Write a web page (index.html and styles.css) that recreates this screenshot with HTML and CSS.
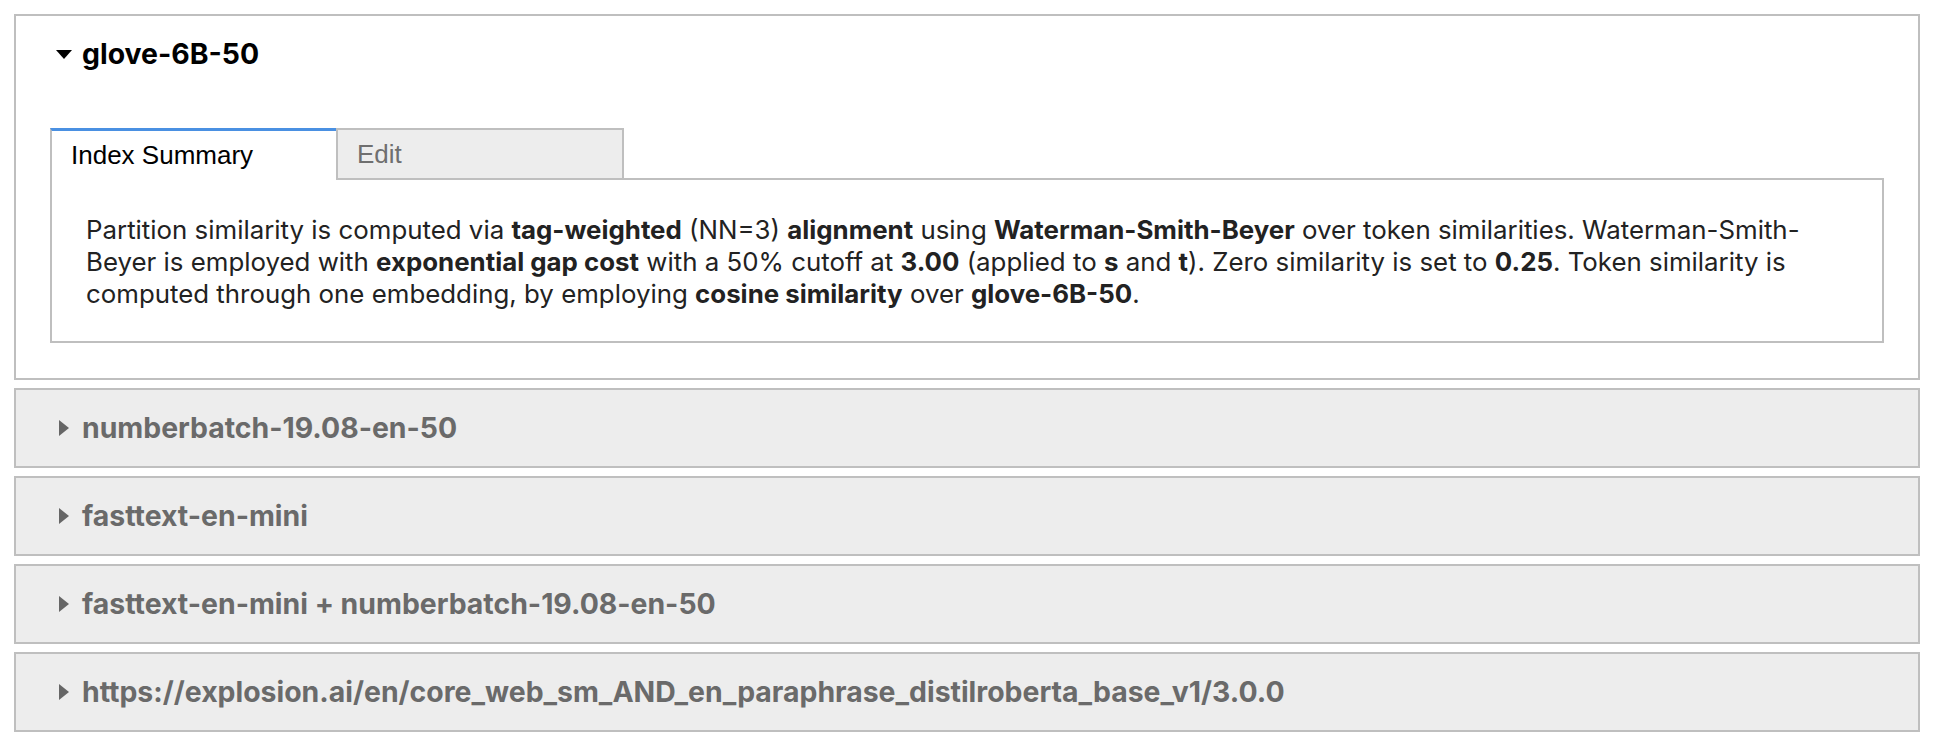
FILE: index.html
```html
<!DOCTYPE html>
<html lang="en">
<head>
<meta charset="utf-8">
<title>Indexes</title>
<link rel="stylesheet" href="styles.css">
</head>
<body>
<div class="list">
  <details class="item" open>
    <summary class="item-head"><span class="marker marker-open"></span><span class="item-title">glove-6B-50</span></summary>
    <div class="item-body">
      <div class="tabs">
        <div class="tab tab-active">Index Summary</div>
        <div class="tab tab-idle">Edit</div>
        <div class="tab-fill"></div>
      </div>
      <div class="panel">
        <p class="summary-text">Partition similarity is computed via <b>tag-weighted</b> (NN=3) <b>alignment</b> using <b>Waterman-Smith-Beyer</b> over token similarities. Waterman-Smith-Beyer is employed with <b>exponential gap cost</b> with a 50% cutoff at <b>3.00</b> (applied to <b>s</b> and <b>t</b>). Zero similarity is set to <b>0.25</b>. Token similarity is computed through one embedding, by employing <b>cosine similarity</b> over <b>glove-6B-50</b>.</p>
      </div>
    </div>
  </details>
  <details class="item item-closed">
    <summary class="item-head"><span class="marker marker-closed"></span><span class="item-title">numberbatch-19.08-en-50</span></summary>
  </details>
  <details class="item item-closed">
    <summary class="item-head"><span class="marker marker-closed"></span><span class="item-title">fasttext-en-mini</span></summary>
  </details>
  <details class="item item-closed">
    <summary class="item-head"><span class="marker marker-closed"></span><span class="item-title">fasttext-en-mini + numberbatch-19.08-en-50</span></summary>
  </details>
  <details class="item item-closed">
    <summary class="item-head"><span class="marker marker-closed"></span><span class="item-title">https://explosion.ai/en/core_web_sm_AND_en_paraphrase_distilroberta_base_v1/3.0.0</span></summary>
  </details>
</div>
</body>
</html>
```

FILE: styles.css
```css
html, body {
  margin: 0;
  padding: 0;
  background: #ffffff;
}

body {
  font-family: Inter, Roboto, "Liberation Sans", sans-serif;
  color: #222222;
}

.list {
  display: flex;
  flex-direction: column;
  gap: 8px;
  padding: 14px;
}

.item {
  border: 2px solid #bfbfbf;
  background: #ffffff;
}

.item-closed {
  background: #ededed;
}

.item-head {
  list-style: none;
  display: flex;
  align-items: center;
  height: 76px;
  padding-left: 40px;
  cursor: pointer;
}

.item-head::-webkit-details-marker {
  display: none;
}

.marker {
  width: 16px;
  height: 16px;
  flex: none;
  display: flex;
  justify-content: center;
  align-items: center;
  margin-right: 10px;
}

.marker-open::before {
  content: "";
  display: block;
  width: 0;
  height: 0;
  border-left: 8px solid transparent;
  border-right: 8px solid transparent;
  border-top: 9px solid #000000;
}

.marker-closed::before {
  content: "";
  display: block;
  width: 0;
  height: 0;
  border-top: 8px solid transparent;
  border-bottom: 8px solid transparent;
  border-left: 10px solid #666666;
}

.item-title {
  font-family: Inter, Roboto, "Liberation Sans", sans-serif;
  font-weight: 700;
  font-size: 28.4px;
  line-height: 36px;
  color: #000000;
}

.item-closed .item-title {
  color: #6a6a6a;
}

.item-body {
  padding: 36px 34px 35px;
}

.tabs {
  display: flex;
  height: 52px;
}

.tab {
  box-sizing: border-box;
  height: 52px;
  display: flex;
  align-items: center;
  padding-left: 19px;
  font-family: "Liberation Sans", Arial, sans-serif;
  font-size: 26px;
}

.tab-active {
  width: 286px;
  border-top: 3px solid #4a90e2;
  border-left: 2px solid #bfbfbf;
  background: #ffffff;
  color: #000000;
}

.tab-idle {
  width: 288px;
  border: 2px solid #bfbfbf;
  background: #ededed;
  color: #6f6f6f;
}

.tab-fill {
  flex: 1;
  border-bottom: 2px solid #bfbfbf;
}

.panel {
  border: 2px solid #bfbfbf;
  border-top: none;
  padding: 34px 34px 31px;
}

.summary-text {
  margin: 0;
  font-family: Inter, Roboto, "Liberation Sans", sans-serif;
  font-size: 25.85px;
  line-height: 32px;
  color: #222222;
}

.summary-text b {
  font-weight: 700;
}
```
